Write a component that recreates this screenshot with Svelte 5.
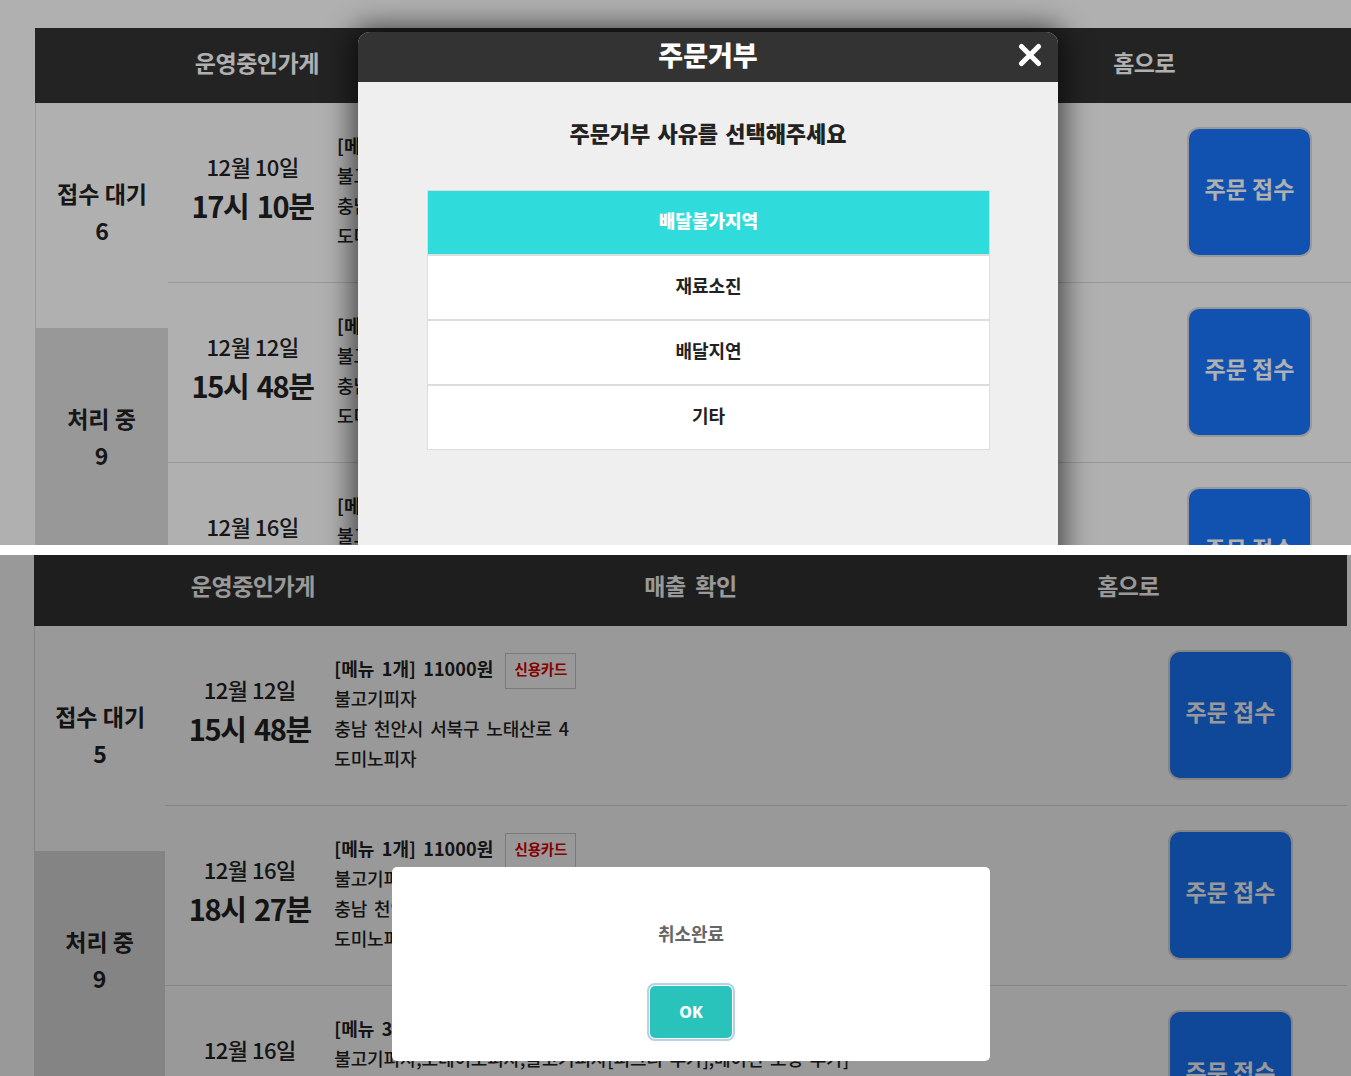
<script>
  const orders = [
    { day: '12월 10일', time: '17시 10분', count: 1, items: '불고기피자' },
    { day: '12월 12일', time: '15시 48분', count: 1, items: '불고기피자' },
    { day: '12월 16일', time: '18시 27분', count: 1, items: '불고기피자' },
    { day: '12월 16일', time: '18시 30분', count: 3, items: '불고기피자,포테이토피자,불고기피자[피크니 추가],베이컨 토핑 추가]' }
  ];
  const reasons = ['배달불가지역', '재료소진', '배달지연', '기타'];
</script>

{#snippet page(rows, waiting)}
  <div class="page">
    <header class="top">
      <span>운영중인가게</span>
      <span>매출 확인</span>
      <span>홈으로</span>
    </header>
    <div class="body">
      <aside class="side">
        <div class="side-item">접수 대기<br />{waiting}</div>
        <div class="side-item pending">처리 중<br />9</div>
      </aside>
      <div class="list">
        {#each rows as o}
          <div class="row">
            <div class="when">
              <div class="day">{o.day}</div>
              <div class="time">{o.time}</div>
            </div>
            <div class="info">
              <div class="line first">
                <b>[메뉴 {o.count}개] 11000원</b>
                <span class="tag">신용카드</span>
              </div>
              <div class="line">{o.items}</div>
              <div class="line">충남 천안시 서북구 노태산로 4</div>
              <div class="line">도미노피자</div>
            </div>
            <button class="accept">주문 접수</button>
          </div>
        {/each}
      </div>
    </div>
  </div>
{/snippet}

<div class="shot shot-a">
  {@render page(orders.slice(0, 3), 6)}
  <div class="dim dim-a"></div>
  <div class="reject">
    <div class="reject-head">
      <span>주문거부</span>
      <svg class="close" viewBox="0 0 24 24" aria-hidden="true">
        <path d="M3.5 3.5 L20.5 20.5 M20.5 3.5 L3.5 20.5" />
      </svg>
    </div>
    <h2>주문거부 사유를 선택해주세요</h2>
    <div class="reasons">
      {#each reasons as r, i}
        <div class="reason" class:picked={i === 0}>{r}</div>
      {/each}
    </div>
  </div>
</div>

<div class="shot shot-b">
  {@render page(orders.slice(1), 5)}
  <div class="dim dim-b"></div>
  <div class="alert">
    <p>취소완료</p>
    <button class="ok">OK</button>
  </div>
</div>

<style>
  :global(body) {
    background: #fff;
  }

  .shot {
    position: relative;
    overflow: hidden;
    background: #fff;
    font-family: "Noto Sans CJK KR", "Noto Sans", sans-serif;
    color: #222;
  }

  .shot-a {
    height: 545px;
    padding: 28px 0 0 35px;
    box-sizing: border-box;
    width: 1351px;
  }

  .shot-a .page {
    width: 1331px;
  }

  .shot-b {
    height: 521px;
    margin-top: 10px;
    padding-left: 34px;
    box-sizing: border-box;
    width: 1351px;
  }

  .shot-b .page {
    width: 1313px;
  }

  .shot-b .top {
    height: 71px;
    padding-bottom: 12px;
  }

  .top {
    height: 75px;
    box-sizing: border-box;
    padding-bottom: 8px;
    background: #333;
    display: grid;
    grid-template-columns: repeat(3, 1fr);
    align-items: center;
    text-align: center;
    color: #fff;
    font-size: 23px;
    font-weight: 700;
    letter-spacing: -0.5px;
    word-spacing: 5px;
  }

  .body {
    display: flex;
  }

  .side {
    width: 10%;
    flex: none;
    box-sizing: border-box;
    border-left: 1px solid #e0e0e0;
  }

  .side-item {
    height: 225px;
    box-sizing: border-box;
    padding-bottom: 7px;
    display: flex;
    flex-direction: column;
    justify-content: center;
    text-align: center;
    font-size: 23px;
    font-weight: 700;
    line-height: 37px;
  }

  .side-item.pending {
    background: #ddd;
    margin-left: -1px;
  }

  .list {
    flex: 1;
    min-width: 0;
  }

  .row {
    height: 180px;
    box-sizing: border-box;
    border-bottom: 1px solid #ddd;
    display: flex;
    align-items: center;
    position: relative;
  }

  .when {
    width: 169px;
    flex: none;
    text-align: center;
    margin-top: -12px;
  }

  .day {
    font-size: 22px;
    font-weight: 500;
    line-height: 36px;
    letter-spacing: -0.5px;
  }

  .time {
    font-size: 29px;
    font-weight: 700;
    line-height: 42px;
    letter-spacing: -1.3px;
    word-spacing: 3px;
  }

  .info {
    flex: 1;
    font-size: 18px;
    font-weight: 500;
    line-height: 30px;
    white-space: nowrap;
    letter-spacing: -0.15px;
    word-spacing: 3px;
    margin-top: -6px;
  }

  .info b {
    font-weight: 700;
    letter-spacing: 0.1px;
  }

  .line {
    height: 30px;
  }

  .line.first {
    display: flex;
    align-items: center;
  }

  .tag {
    margin: 6px 0 0 12px;
    padding: 0 8px;
    height: 36px;
    line-height: 30px;
    box-sizing: border-box;
    border: 1px solid #ccc;
    color: #e00000;
    font-size: 14.5px;
    font-weight: 700;
  }

  .accept {
    flex: none;
    width: 125px;
    height: 130px;
    margin: 0 54px 1px 0;
    padding: 0 0 8px;
    background: #1a78ff;
    color: #fff;
    border: 2px solid #ddd;
    border-radius: 12px;
    font-family: inherit;
    font-size: 23px;
    font-weight: 700;
  }

  .dim {
    position: absolute;
    inset: 0;
  }

  .dim-a {
    background: rgba(0, 0, 0, 0.31);
  }

  .dim-b {
    background: rgba(0, 0, 0, 0.4);
  }

  .reject {
    position: absolute;
    left: 358px;
    top: 32px;
    width: 700px;
    height: 600px;
    background: #efefef;
    border-radius: 12px 12px 0 0;
    box-shadow: 0 0 28px 6px rgba(0, 0, 0, 0.6);
  }

  .reject-head {
    height: 50px;
    box-sizing: border-box;
    padding-bottom: 6px;
    background: #333;
    border-radius: 12px 12px 0 0;
    color: #fff;
    font-size: 27px;
    font-weight: 900;
    display: flex;
    align-items: center;
    justify-content: center;
    position: relative;
  }

  .close {
    position: absolute;
    right: 16px;
    top: 11px;
    width: 24px;
    height: 24px;
    fill: none;
    stroke: #fff;
    stroke-width: 5;
    stroke-linecap: round;
  }

  .reject h2 {
    margin: 33px 0 0;
    font-size: 22px;
    font-weight: 900;
    line-height: 34px;
    word-spacing: 2px;
    text-align: center;
    color: #222;
  }

  .reasons {
    margin: 41px 68px 0 69px;
    border: 1px solid #ddd;
    border-bottom-width: 0;
    background: #fff;
  }

  .reason {
    height: 65px;
    box-sizing: border-box;
    padding-bottom: 6px;
    border-bottom: 2px solid #ddd;
    display: flex;
    align-items: center;
    justify-content: center;
    font-size: 18px;
    font-weight: 700;
    color: #222;
  }

  .reason:last-child {
    height: 64px;
    border-bottom-width: 1px;
  }

  .reason.picked {
    background: #2fdbdb;
    color: #fff;
    font-weight: 900;
  }

  .alert {
    position: absolute;
    left: 392px;
    top: 312px;
    width: 598px;
    height: 194px;
    background: #fff;
    border-radius: 5px;
    display: flex;
    flex-direction: column;
    align-items: center;
  }

  .alert p {
    margin: 52px 0 0;
    font-size: 18px;
    font-weight: 700;
    line-height: 28px;
    color: #666;
  }

  .ok {
    margin-top: 39px;
    width: 82px;
    height: 52px;
    background: #2ac3bc;
    color: #fff;
    border: none;
    border-radius: 5px;
    font-family: "Noto Sans", sans-serif;
    font-size: 16px;
    font-weight: 800;
    box-shadow: 0 0 0 1px #fff, 0 0 0 3px rgba(150, 190, 220, 0.7);
  }
</style>
